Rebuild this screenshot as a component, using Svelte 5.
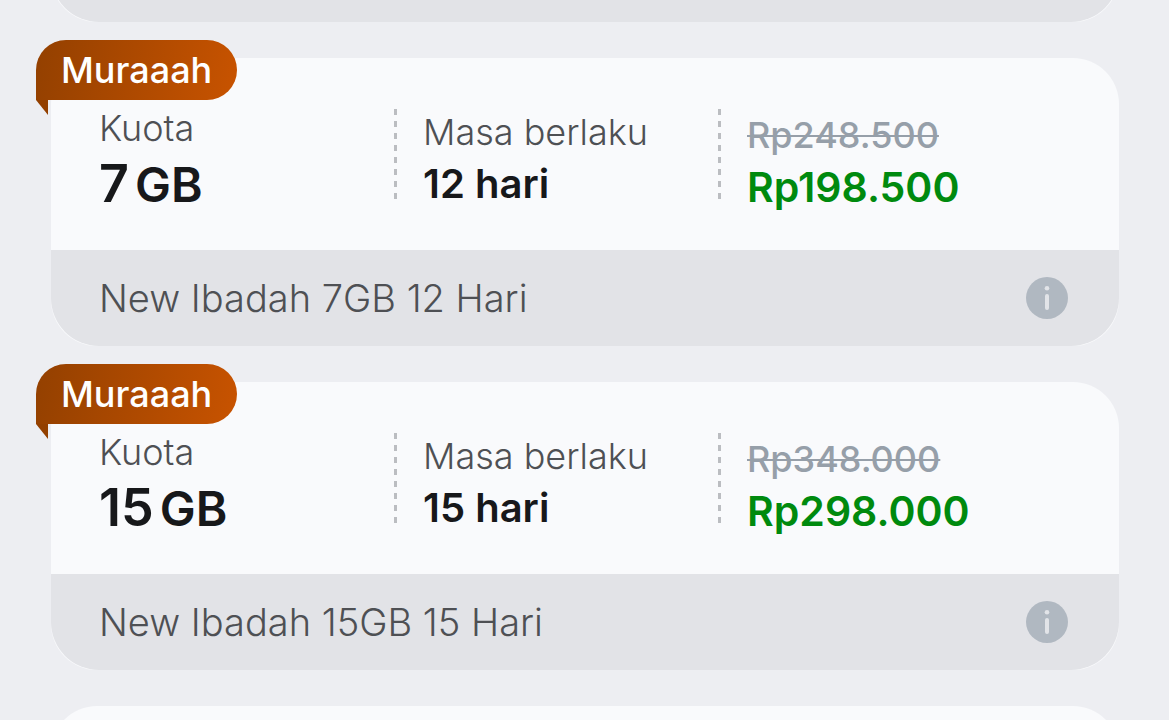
<script>
    const packages = [
        {
            id: 1,
            label: "Muraaah",
            quota: 7,
            days: 12,
            oldPrice: "Rp248.500",
            price: "Rp198.500",
            name: "New Ibadah 7GB 12 Hari",
        },
        {
            id: 2,
            label: "Muraaah",
            quota: 15,
            days: 15,
            oldPrice: "Rp348.000",
            price: "Rp298.000",
            name: "New Ibadah 15GB 15 Hari",
        },
    ];
</script>

<main class="screen">
    <div class="list">
        <div class="card">
            <div class="footer"></div>
        </div>

        {#each packages as item (item.id)}
            <article class="card">
                <div class="badge">{item.label}</div>

                <div class="body">
                    <div class="column">
                        <div class="quota">
                            <div class="caption">Kuota</div>
                            <div class="amount">
                                {item.quota}<span class="unit">GB</span>
                            </div>
                        </div>
                        <div class="divider"></div>
                    </div>
                    <div class="column">
                        <div class="validity">
                            <div class="caption">Masa berlaku</div>
                            <div class="value">{item.days} hari</div>
                        </div>
                        <div class="divider"></div>
                    </div>
                    <div class="column">
                        <div class="pricing">
                            <s class="old-price">{item.oldPrice}</s>
                            <div class="value price">{item.price}</div>
                        </div>
                    </div>
                </div>

                <div class="footer">
                    <span class="name">{item.name}</span>
                    <button class="info" aria-label="Info {item.name}">
                        <svg viewBox="0 0 42 42">
                            <circle cx="21" cy="21" r="21" fill="#b0b8c1" />
                            <circle cx="21" cy="11.2" r="2.3" fill="#e2e4e8" />
                            <rect x="19" y="17" width="4" height="16" rx="2" fill="#e2e4e8" />
                        </svg>
                    </button>
                </div>
            </article>
        {/each}

        <div class="card">
            <div class="body"></div>
        </div>
    </div>
</main>

<style>
    :global(body) {
        background: #edeef2;
    }

    .screen {
        height: 100vh;
        overflow: hidden;
        font-family: Inter, "Liberation Sans", sans-serif;
    }

    /* The list is scrolled, so the first card is cut at the top */
    .list {
        display: flex;
        flex-direction: column;
        gap: 36px;
        margin-top: -74px;
        padding: 0 50px 0 51px;
    }

    .card {
        position: relative;
        border-radius: 46px;
        background: #f9fafc;
    }

    .badge {
        position: absolute;
        top: -18px;
        left: -15px;
        padding: 0 25px;
        border-radius: 30px 30px 30px 0;
        background: linear-gradient(100deg, #934000, #c85300);
        color: #fff;
        font-size: 36px;
        font-weight: 500;
        line-height: 60px;
    }

    .badge::after {
        content: "";
        position: absolute;
        top: 100%;
        left: 0;
        width: 12px;
        height: 15px;
        background: #934000;
        clip-path: polygon(0 0, 100% 0, 100% 100%);
    }

    .body {
        display: grid;
        grid-template-columns: repeat(3, 1fr);
        align-items: center;
        box-sizing: border-box;
        min-height: 192px;
        padding: 0 48px;
    }

    .column {
        display: flex;
        align-items: center;
        justify-content: space-between;
        white-space: nowrap;
    }

    .quota,
    .validity {
        padding-top: 16px;
    }

    .pricing {
        padding-top: 22px;
    }

    .divider {
        width: 3px;
        height: 90px;
        margin-right: 26px;
        background: repeating-linear-gradient(#bbbdc1 0 6px, transparent 6px 12px);
    }

    .caption {
        color: #4e5054;
        font-size: 36px;
        font-weight: 300;
        line-height: 44px;
    }

    .amount {
        display: flex;
        align-items: baseline;
        gap: 6px;
        color: #17181a;
        font-size: 52px;
        font-weight: 600;
        line-height: 68px;
    }

    .unit {
        font-size: 48px;
    }

    .value {
        color: #17181a;
        font-size: 40px;
        font-weight: 600;
        line-height: 60px;
    }

    .old-price {
        display: block;
        color: #969fa9;
        font-size: 36px;
        font-weight: 500;
        line-height: 44px;
        text-decoration-thickness: 2px;
    }

    .price {
        color: #008a0e;
        font-size: 41px;
    }

    .footer {
        display: flex;
        align-items: center;
        justify-content: space-between;
        box-sizing: border-box;
        min-height: 96px;
        padding: 0 51px 0 48px;
        border-radius: 0 0 48px 48px;
        background: #e2e3e7;
    }

    .name {
        color: #4e5054;
        font-size: 38px;
        font-weight: 300;
    }

    .info {
        width: 42px;
        height: 42px;
        padding: 0;
        border: none;
        background: none;
        cursor: pointer;
    }

    .info svg {
        display: block;
    }
</style>
